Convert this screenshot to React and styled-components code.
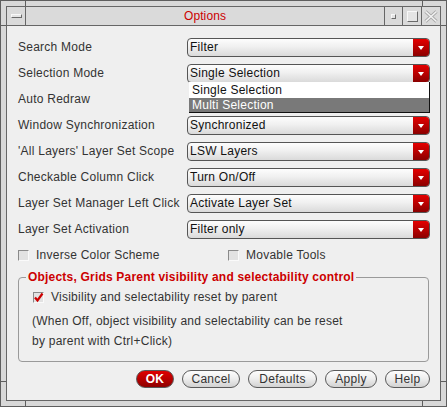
import React from "react";
import styled, { createGlobalStyle } from "styled-components";

const GlobalStyle = createGlobalStyle`
  html, body {
    margin: 0;
    padding: 0;
    background: #d8d8d8;
  }
  body {
    font-family: "Liberation Sans", Arial, sans-serif;
  }
`;

const Frame = styled.div`
  position: relative;
  width: 447px;
  height: 407px;
  box-sizing: border-box;
  border: 1px solid #5e5e5e;
  background: #d8d8d8;
  padding: 5px;
`;

// little resize marks cutting across the frame border
const Notch = styled.span`
  position: absolute;
  background: #5e5e5e;
  width: ${(p) => (p.$vertical ? "1px" : "5px")};
  height: ${(p) => (p.$vertical ? "5px" : "1px")};
  ${(p) => (p.$top !== undefined ? `top: ${p.$top}px;` : "")}
  ${(p) => (p.$bottom !== undefined ? `bottom: ${p.$bottom}px;` : "")}
  ${(p) => (p.$left !== undefined ? `left: ${p.$left}px;` : "")}
  ${(p) => (p.$right !== undefined ? `right: ${p.$right}px;` : "")}
`;

const Window = styled.div`
  height: 100%;
  box-sizing: border-box;
  border: 1px solid #666;
  display: flex;
  flex-direction: column;
`;

const TitleBar = styled.div`
  display: flex;
  height: 18px;
  border-bottom: 1px solid #666;
  background: #dadada;
`;

const TitleButton = styled.div`
  width: ${(p) => p.$w || 18}px;
  flex: 0 0 auto;
  display: flex;
  align-items: center;
  justify-content: center;
  ${(p) => (p.$side === "left" ? "border-right: 1px solid #666;" : "border-left: 1px solid #666;")}
`;

const Raised = styled.span`
  display: block;
  box-sizing: border-box;
  width: ${(p) => p.$w}px;
  height: ${(p) => p.$h}px;
  background: #e4e4e4;
  border-top: 1px solid #f8f8f8;
  border-left: 1px solid #f8f8f8;
  border-bottom: 1px solid #6a6a6a;
  border-right: 1px solid #6a6a6a;
`;

const Title = styled.div`
  flex: 1;
  text-align: center;
  color: #cc0000;
  font-size: 12px;
  line-height: 18px;
  letter-spacing: 0.1px;
`;

const Content = styled.div`
  flex: 1;
  background: #efefef;
  padding: 12px 10px 0 11px;
  display: flex;
  flex-direction: column;
  color: #333;
  font-size: 12px;
  letter-spacing: 0.25px;
`;

const Form = styled.div`
  display: grid;
  grid-template-columns: 169px 1fr;
  row-gap: 7px;
  align-items: center;
`;

const Label = styled.div`
  white-space: nowrap;
  line-height: 19px;
`;

const SelectWrap = styled.div`
  position: relative;
  height: 19px;
`;

const Select = styled.div`
  height: 19px;
  box-sizing: border-box;
  border: 1px solid #555;
  border-radius: 4px;
  background: linear-gradient(#fdfdfd, #f0f0f0 45%, #dadada);
  display: flex;
  align-items: center;
  overflow: hidden;
  color: #111;
`;

const SelectText = styled.span`
  flex: 1;
  padding-left: 2px;
  line-height: 17px;
`;

const Arrow = styled.span`
  width: 16px;
  height: 100%;
  background: linear-gradient(#e40000, #b00000 60%, #8a0000);
  display: flex;
  align-items: center;
  justify-content: center;

  &::after {
    content: "";
    border-left: 3px solid transparent;
    border-right: 3px solid transparent;
    border-top: 4px solid #fff;
  }
`;

const Popup = styled.div`
  position: absolute;
  top: 18px;
  left: 2px;
  right: 0;
  z-index: 2;
  background: #fff;
  border-right: 1px solid #111;
  border-bottom: 1px solid #111;
  color: #111;
`;

const PopupItem = styled.div`
  height: ${(p) => (p.$active ? 14 : 16)}px;
  line-height: ${(p) => (p.$active ? 14 : 16)}px;
  padding-left: 3px;
  background: ${(p) => (p.$active ? "#797979" : "#fff")};
  color: ${(p) => (p.$active ? "#fff" : "#111")};
`;

const CheckRow = styled.div`
  grid-column: 1 / -1;
  display: grid;
  grid-template-columns: 210px 1fr;
  height: 18px;
  align-items: center;
`;

const CheckItem = styled.label`
  display: flex;
  align-items: center;
  gap: 7px;
  white-space: nowrap;
`;

const Box = styled.span`
  width: 11px;
  height: 11px;
  box-sizing: border-box;
  background: #e2e2e2;
  border-top: 1px solid #8a8a8a;
  border-left: 1px solid #8a8a8a;
  border-bottom: 1px solid #fafafa;
  border-right: 1px solid #fafafa;
  display: flex;
  align-items: center;
  justify-content: center;
  flex: 0 0 auto;
`;

const Group = styled.fieldset`
  margin: 6px 1px 0 0;
  padding: 4px 12px 10px 13px;
  border: 1px solid #9a9a9a;
  border-radius: 4px;
`;

const Legend = styled.legend`
  margin-left: -6px;
  padding: 0 2px;
  color: #cc0000;
  font-weight: bold;
  letter-spacing: 0.2px;
  line-height: 14px;
`;

const GroupCheck = styled(CheckItem)`
  height: 18px;
  padding-left: 1px;
`;

const Note = styled.p`
  margin: 5px 0 0;
  line-height: 20px;
`;

const Buttons = styled.div`
  display: flex;
  justify-content: flex-end;
  gap: 8px;
  margin-top: 8px;
`;

const Button = styled.button`
  width: ${(p) => p.$w}px;
  height: 18px;
  padding: 0;
  box-sizing: border-box;
  border: 1px solid #5a5a5a;
  border-radius: 9px;
  font-family: inherit;
  font-size: 12px;
  letter-spacing: 0.3px;
  font-weight: ${(p) => (p.$primary ? "bold" : "normal")};
  color: ${(p) => (p.$primary ? "#fff" : "#333")};
  background: ${(p) =>
    p.$primary
      ? "linear-gradient(#e00000, #b40000 55%, #8e0000)"
      : "linear-gradient(#fdfdfd, #efefef 45%, #d2d2d2)"};
`;

const rows = [
  ["Search Mode", "Filter"],
  ["Selection Mode", "Single Selection", true],
  ["Auto Redraw", null],
  ["Window Synchronization", "Synchronized"],
  ["'All Layers' Layer Set Scope", "LSW Layers"],
  ["Checkable Column Click", "Turn On/Off"],
  ["Layer Set Manager Left Click", "Activate Layer Set"],
  ["Layer Set Activation", "Filter only"],
];

const CloseIcon = () => (
  <svg width="14" height="13" viewBox="0 0 14 13">
    <path d="M1.5 1.5 L12.5 11.5 M12.5 1.5 L1.5 11.5" stroke="#a8a8a8" strokeWidth="3.2" fill="none" />
    <path d="M1.5 1.5 L12.5 11.5 M12.5 1.5 L1.5 11.5" stroke="#f2f2f2" strokeWidth="1.6" fill="none" />
  </svg>
);

const Tick = () => (
  <svg width="11" height="11" viewBox="0 0 11 11" style={{ position: "absolute" }}>
    <path d="M2 5.5 L4.5 8.5 L9.5 1.5" stroke="#cc0000" strokeWidth="2.2" fill="none" />
  </svg>
);

const TickBox = styled(Box)`
  position: relative;
`;

export default function App() {
  return (
    <>
      <GlobalStyle />
      <Frame>
        <Notch $vertical $top={0} $left={24} />
        <Notch $vertical $top={0} $right={23} />
        <Notch $vertical $bottom={0} $left={24} />
        <Notch $vertical $bottom={0} $right={23} />
        <Notch $top={24} $left={0} />
        <Notch $top={24} $right={0} />
        <Notch $bottom={24} $left={0} />
        <Notch $bottom={24} $right={0} />
        <Window>
          <TitleBar>
            <TitleButton $side="left">
              <Raised $w={11} $h={4} />
            </TitleButton>
            <Title>Options</Title>
            <TitleButton $w={17}>
              <Raised $w={5} $h={5} />
            </TitleButton>
            <TitleButton>
              <Raised $w={11} $h={11} />
            </TitleButton>
            <TitleButton>
              <CloseIcon />
            </TitleButton>
          </TitleBar>
          <Content>
            <Form>
              {rows.map(([label, value, open]) => (
                <React.Fragment key={label}>
                  <Label>{label}</Label>
                  <SelectWrap>
                    {value && (
                      <Select>
                        <SelectText>{value}</SelectText>
                        <Arrow />
                      </Select>
                    )}
                    {open && (
                      <Popup>
                        <PopupItem>Single Selection</PopupItem>
                        <PopupItem $active>Multi Selection</PopupItem>
                      </Popup>
                    )}
                  </SelectWrap>
                </React.Fragment>
              ))}
              <CheckRow>
                <CheckItem>
                  <Box />
                  Inverse Color Scheme
                </CheckItem>
                <CheckItem>
                  <Box />
                  Movable Tools
                </CheckItem>
              </CheckRow>
            </Form>
            <Group>
              <Legend>Objects, Grids Parent visibility and selectability control</Legend>
              <GroupCheck>
                <TickBox>
                  <Tick />
                </TickBox>
                Visibility and selectability reset by parent
              </GroupCheck>
              <Note>
                (When Off, object visibility and selectability can be reset
                <br />
                by parent with Ctrl+Click)
              </Note>
            </Group>
            <Buttons>
              <Button $primary $w={38}>OK</Button>
              <Button $w={58}>Cancel</Button>
              <Button $w={69}>Defaults</Button>
              <Button $w={52}>Apply</Button>
              <Button $w={45}>Help</Button>
            </Buttons>
          </Content>
        </Window>
      </Frame>
    </>
  );
}
